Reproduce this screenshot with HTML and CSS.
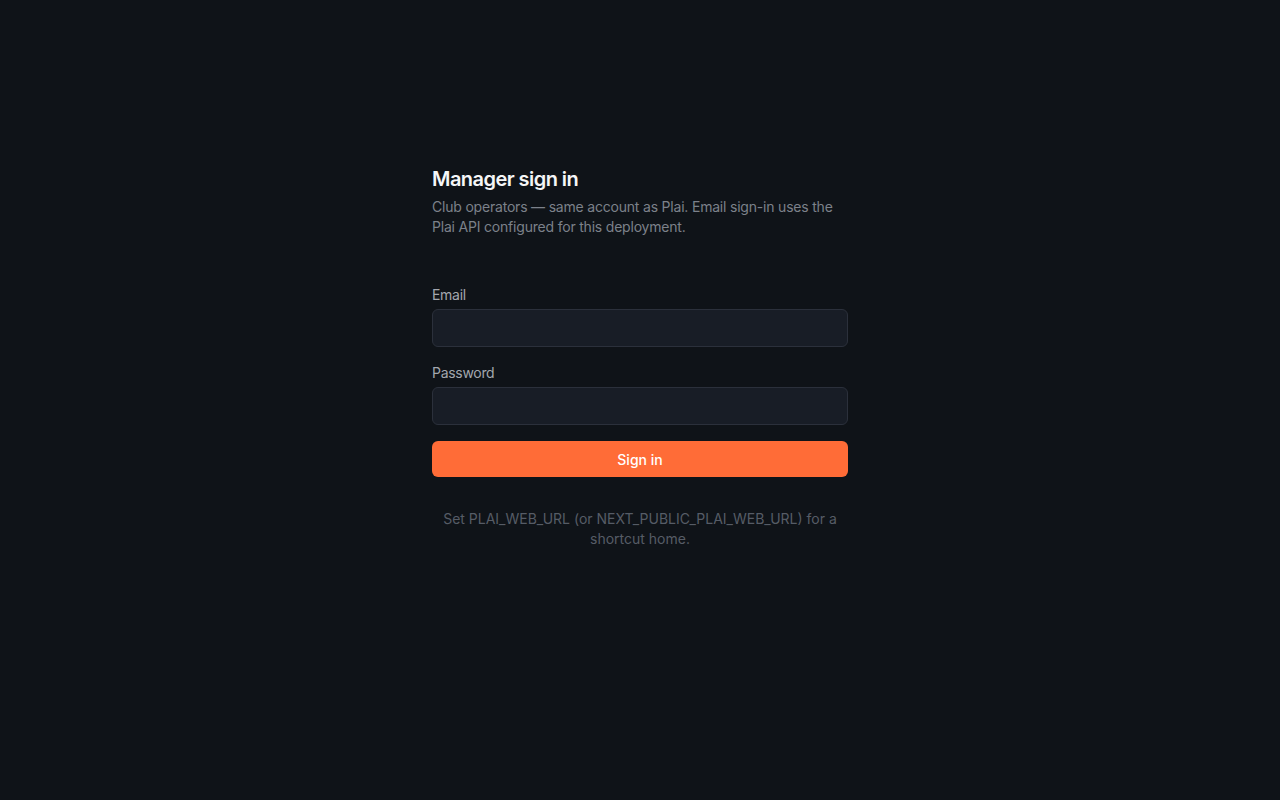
FILE: index.html
```html
<!DOCTYPE html>
<html lang="en">
<head>
  <meta charset="UTF-8">
  <meta name="viewport" content="width=device-width, initial-scale=1.0">
  <title>Manager sign in</title>
  <link rel="stylesheet" href="styles.css">
</head>
<body>
  <main class="auth">
    <header class="auth-header">
      <h1>Manager sign in</h1>
      <p class="auth-sub">Club operators — same account as Plai. Email sign-in uses the Plai API configured for this deployment.</p>
    </header>

    <form class="auth-form" onsubmit="return false;">
      <label class="field">
        <span class="field-label">Email</span>
        <input type="email" name="email" autocomplete="email">
      </label>
      <label class="field">
        <span class="field-label">Password</span>
        <input type="password" name="password" autocomplete="current-password">
      </label>
      <button type="submit" class="btn-primary">Sign in</button>
    </form>

    <p class="auth-note">Set PLAI_WEB_URL (or NEXT_PUBLIC_PLAI_WEB_URL) for a shortcut home.</p>
  </main>
</body>
</html>
```

FILE: styles.css
```css
* {
  box-sizing: border-box;
}

body {
  margin: 0;
  min-height: 100vh;
  background: #0f1318;
  color: #f3f4f6;
  font-family: 'Inter', 'Noto Sans', sans-serif;
  -webkit-font-smoothing: antialiased;
}

.auth {
  width: 416px;
  margin: 0 auto;
  padding-top: 165px;
}

.auth-header h1 {
  margin: 0 0 4px;
  font-size: 20px;
  line-height: 28px;
  font-weight: 600;
  letter-spacing: -0.55px;
  color: #f5f6f7;
}

.auth-sub {
  margin: 0;
  font-size: 14px;
  line-height: 20px;
  letter-spacing: -0.2px;
  color: #7c818a;
}

.auth-form {
  margin-top: 48px;
  display: flex;
  flex-direction: column;
  gap: 16px;
}

.field {
  display: flex;
  flex-direction: column;
  gap: 4px;
}

.field-label {
  font-size: 14px;
  line-height: 20px;
  letter-spacing: -0.3px;
  color: #a3a7ae;
}

.field input {
  height: 38px;
  width: 100%;
  padding: 0 12px;
  background: #181d26;
  border: 1px solid #2b303b;
  border-radius: 6px;
  color: #f3f4f6;
  font: inherit;
  font-size: 14px;
  outline: none;
}

.field input:focus {
  border-color: #ff6c37;
}

.btn-primary {
  height: 36px;
  border: none;
  border-radius: 6px;
  background: #ff6c37;
  color: #fff;
  font: inherit;
  font-size: 14px;
  font-weight: 500;
  cursor: pointer;
}

.btn-primary:hover {
  background: #ff7a4a;
}

.auth-note {
  margin: 32px 0 0;
  text-align: center;
  font-size: 14px;
  line-height: 20px;
  color: #565c66;
}
```
